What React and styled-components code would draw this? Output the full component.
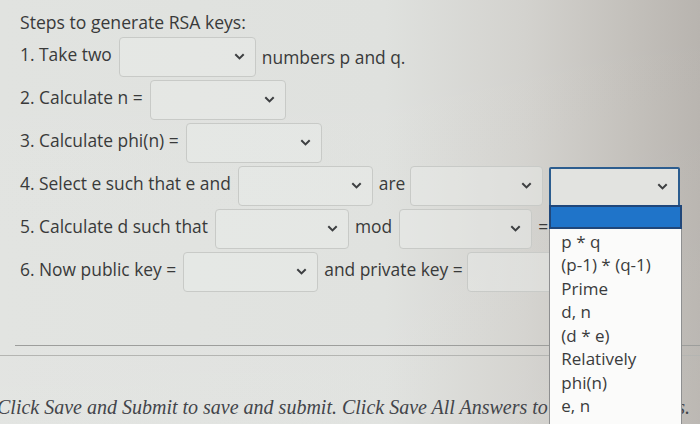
import styled, { createGlobalStyle } from "styled-components";

const GlobalStyle = createGlobalStyle`
  html, body {
    margin: 0;
    padding: 0;
    width: 700px;
    height: 424px;
    overflow: hidden;
  }

  body {
    background:
      linear-gradient(180deg, rgba(255, 255, 255, 0) 0%, rgba(255, 255, 255, 0.06) 100%),
      linear-gradient(90deg, #e1e3e0 0%, #dfe1de 55%, #d3d2ce 75%, #c3c0bb 90%, #b8b4af 100%);
    font-family: "Open Sans", "Noto Sans", sans-serif;
    color: #393a3a;
  }
`;

const Page = styled.div`
  position: relative;
  padding: 10px 0 0 20px;
`;

const Title = styled.div`
  font-size: 17.6px;
  line-height: 24px;
  margin-bottom: 2px;
`;

const Rows = styled.div`
  display: flex;
  flex-direction: column;
  gap: 2px;
`;

const Row = styled.div`
  display: flex;
  align-items: center;
  height: 41px;
  font-size: 17.4px;
  white-space: nowrap;
`;

const Label = styled.span`
  margin: 0 6px ${(p) => p.$mb ?? 6}px 0;
`;

const Select = styled.div`
  position: relative;
  box-sizing: border-box;
  width: ${(p) => p.$w || 135}px;
  height: 40px;
  margin: ${(p) => (p.$dy ? `${p.$dy}px` : 0)} 6px 0 ${(p) => p.$ml ?? 1}px;
  border: ${(p) => (p.$focus ? "2px solid #2c5d8f" : "1px solid #c8cac7")};
  border-radius: ${(p) => (p.$focus ? 2 : 4)}px;
  background: ${(p) => (p.$focus ? "#e2e3e0" : "rgba(236, 238, 235, 0.45)")};
  display: flex;
  align-items: center;
  justify-content: flex-end;
  padding-right: 10px;

  svg {
    width: 11px;
    height: 7px;
  }
`;

const Chevron = () => (
  <svg viewBox="0 0 11 7">
    <path d="M1.3 1.2 L5.5 5.4 L9.7 1.2" fill="none" stroke="#3d3f41" strokeWidth="2" />
  </svg>
);

const List = styled.div`
  position: absolute;
  top: 100%;
  left: -2px;
  width: 133px;
  z-index: 2;
`;

const Highlight = styled.div`
  height: 24px;
  box-sizing: border-box;
  background: #1f74c9;
  border: 2px solid #20477a;
`;

const Options = styled.div`
  background: #fbfbfa;
  border: 1px solid #8e8f90;
  border-top: none;
  padding: 1px 0 12px 11px;
  height: 210px;
`;

const Option = styled.div`
  font-size: 17px;
  line-height: 23.5px;
  color: #3a3b3c;
  white-space: pre;
`;

const Rules = styled.div`
  margin-top: 53px;
  margin-left: -20px;
`;

const Rule = styled.div`
  height: 1px;
  margin-left: ${(p) => p.$ml}px;
  margin-bottom: ${(p) => p.$mb || 0}px;
  background: ${(p) => p.$c};
`;

const Footer = styled.div`
  margin: 40px 0 0 -23px;
  font-family: "Liberation Serif", "DejaVu Serif", serif;
  font-style: italic;
  font-size: 20px;
  color: #43454a;
  white-space: nowrap;
`;

const options = ["p * q", "(p-1) * (q-1)", "Prime", "d, n", "(d * e)", "Relatively", "phi(n)", "e, n"];

export default function App() {
  return (
    <>
      <GlobalStyle />
      <Page>
        <Title>Steps to generate RSA keys:</Title>
        <Rows>
          <Row>
            <Label>1. Take two</Label>
            <Select $w={137}><Chevron /></Select>
            <Label $mb={0}>numbers p and q.</Label>
          </Row>
          <Row>
            <Label>2. Calculate n =</Label>
            <Select $w={136}><Chevron /></Select>
          </Row>
          <Row>
            <Label>3. Calculate phi(n) =</Label>
            <Select $w={136}><Chevron /></Select>
          </Row>
          <Row>
            <Label>4. Select e such that e and</Label>
            <Select $w={135}><Chevron /></Select>
            <Label>are</Label>
            <Select $w={133} $ml={-1}><Chevron /></Select>
            <Select $w={131} $focus $ml={0} $dy={2}>
              <Chevron />
              <List>
                <Highlight />
                <Options>
                  {options.map((o) => (
                    <Option key={o}>{o}</Option>
                  ))}
                </Options>
              </List>
            </Select>
          </Row>
          <Row>
            <Label>5. Calculate d such that</Label>
            <Select $w={134}><Chevron /></Select>
            <Label>mod</Label>
            <Select $w={133}><Chevron /></Select>
            <Label>=</Label>
            <Select $w={124} />
          </Row>
          <Row>
            <Label>6. Now public key =</Label>
            <Select $w={135}><Chevron /></Select>
            <Label>and private key =</Label>
            <Select $w={135} $ml={-2}><Chevron /></Select>
          </Row>
        </Rows>
        <Rules>
          <Rule $ml={15} $c="#9d9e9c" $mb={9} />
          <Rule $ml={0} $c="#b4b5b2" />
        </Rules>
        <Footer>
          Click Save and Submit to save and submit. Click Save All Answers to save all answers.
        </Footer>
      </Page>
    </>
  );
}
